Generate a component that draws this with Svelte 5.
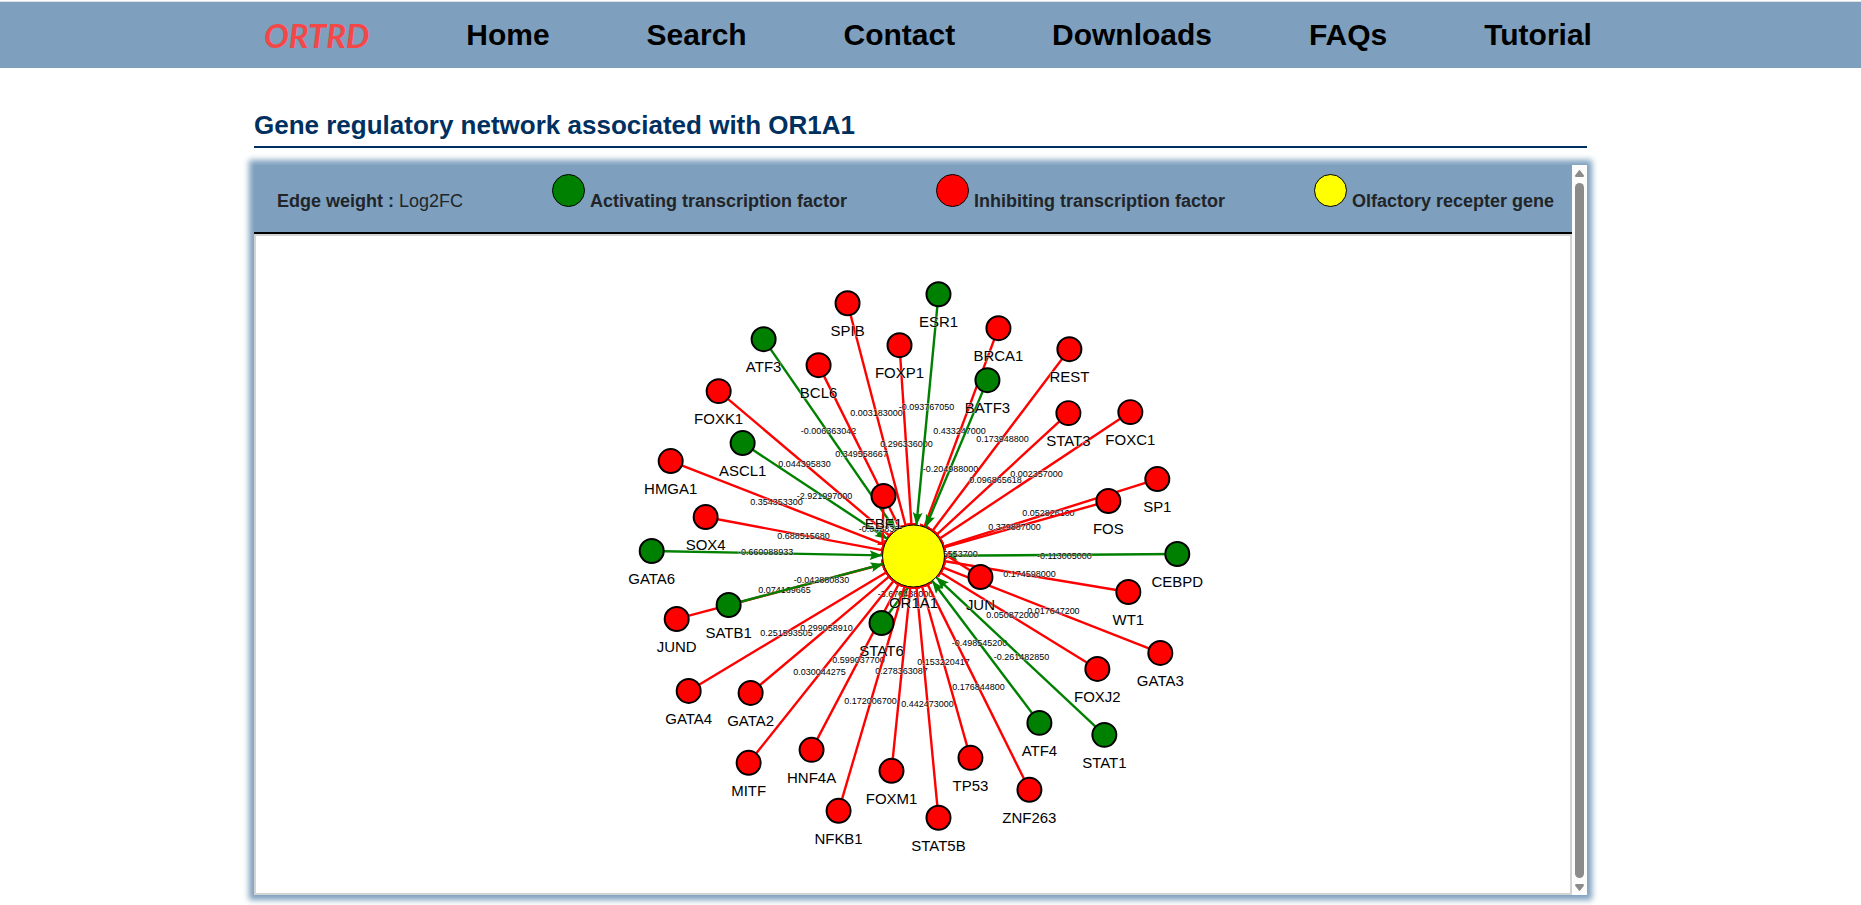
<script lang="ts">
  type Kind = "activating" | "inhibiting";

  interface Factor {
    name: string;
    kind: Kind;
    x: number;
    y: number;
    weight: string;
    labelX: number;
    labelY: number;
    endX?: number;
    endY?: number;
  }

  const navLinks = ["Home", "Search", "Contact", "Downloads", "FAQs", "Tutorial"];

  const legend = [
    { kind: "activating", label: "Activating transcription factor" },
    { kind: "inhibiting", label: "Inhibiting transcription factor" },
    { kind: "receptor", label: "Olfactory recepter gene" },
  ];

  const gene = "OR1A1";
  const geneRadius = 31;
  const factorRadius = 12;

  // node and label positions are relative to the gene in the centre
  const factors: Factor[] = [
    { name: "SPIB", kind: "inhibiting", x: -66, y: -253, weight: "0.003183000", labelX: -37, labelY: -143 },
    { name: "ATF3", kind: "activating", x: -150, y: -217, weight: "-0.006363042", labelX: -85, labelY: -125 },
    { name: "BCL6", kind: "inhibiting", x: -95, y: -191, weight: "0.349558667", labelX: -52, labelY: -102 },
    { name: "FOXP1", kind: "inhibiting", x: -14, y: -211, weight: "0.296336000", labelX: -7, labelY: -112 },
    { name: "FOXK1", kind: "inhibiting", x: -195, y: -165, weight: "0.044395830", labelX: -109, labelY: -92 },
    { name: "ASCL1", kind: "activating", x: -171, y: -113, weight: "-2.921997000", labelX: -89, labelY: -60 },
    { name: "ESR1", kind: "activating", x: 25, y: -262, weight: "-0.093767050", labelX: 13, labelY: -149 },
    { name: "BRCA1", kind: "inhibiting", x: 85, y: -228, weight: "0.433247000", labelX: 46, labelY: -125 },
    { name: "BATF3", kind: "activating", x: 74, y: -176, weight: "-0.204988000", labelX: 37, labelY: -87 },
    { name: "REST", kind: "inhibiting", x: 156, y: -207, weight: "0.173948800", labelX: 89, labelY: -117 },
    { name: "STAT3", kind: "inhibiting", x: 155, y: -143, weight: "0.096865618", labelX: 82, labelY: -76 },
    { name: "FOXC1", kind: "inhibiting", x: 217, y: -144, weight: "0.002357000", labelX: 123, labelY: -82 },
    { name: "HMGA1", kind: "inhibiting", x: -243, y: -95, weight: "0.354353300", labelX: -137, labelY: -54 },
    { name: "SOX4", kind: "inhibiting", x: -208, y: -39, weight: "0.688515680", labelX: -110, labelY: -20 },
    { name: "GATA6", kind: "activating", x: -262, y: -5, weight: "-0.660088933", labelX: -148, labelY: -4 },
    { name: "JUND", kind: "inhibiting", x: -237, y: 63, weight: "0.074169665", labelX: -129, labelY: 34 },
    { name: "SATB1", kind: "activating", x: -185, y: 49, weight: "-0.042880830", labelX: -92, labelY: 24 },
    { name: "EBF1", kind: "inhibiting", x: -30, y: -60, weight: "-0.043830000", labelX: -27, labelY: -27, endX: -31, endY: -13 },
    { name: "SP1", kind: "inhibiting", x: 244, y: -77, weight: "0.052826100", labelX: 135, labelY: -43 },
    { name: "FOS", kind: "inhibiting", x: 195, y: -55, weight: "0.379887000", labelX: 101, labelY: -29 },
    { name: "CEBPD", kind: "activating", x: 264, y: -2, weight: "-0.113005000", labelX: 151, labelY: 0 },
    { name: "WT1", kind: "inhibiting", x: 215, y: 36, weight: "0.174598000", labelX: 116, labelY: 18 },
    { name: "JUN", kind: "inhibiting", x: 67, y: 21, weight: "0.085553700", labelX: 38, labelY: -2, endX: 34, endY: 0 },
    { name: "GATA3", kind: "inhibiting", x: 247, y: 97, weight: "0.017647200", labelX: 140, labelY: 55 },
    { name: "FOXJ2", kind: "inhibiting", x: 184, y: 113, weight: "0.050872000", labelX: 99, labelY: 59 },
    { name: "STAT6", kind: "activating", x: -32, y: 67, weight: "-3.670438000", labelX: -8, labelY: 38, endX: -5, endY: 31 },
    { name: "GATA4", kind: "inhibiting", x: -225, y: 135, weight: "0.251593505", labelX: -127, labelY: 77 },
    { name: "GATA2", kind: "inhibiting", x: -163, y: 137, weight: "0.299058910", labelX: -87, labelY: 72 },
    { name: "MITF", kind: "inhibiting", x: -165, y: 207, weight: "0.030044275", labelX: -94, labelY: 116 },
    { name: "HNF4A", kind: "inhibiting", x: -102, y: 194, weight: "0.599037700", labelX: -55, labelY: 104 },
    { name: "NFKB1", kind: "inhibiting", x: -75, y: 255, weight: "0.172006700", labelX: -43, labelY: 145 },
    { name: "FOXM1", kind: "inhibiting", x: -22, y: 215, weight: "0.278363087", labelX: -12, labelY: 115 },
    { name: "STAT5B", kind: "inhibiting", x: 25, y: 262, weight: "0.442473000", labelX: 14, labelY: 148 },
    { name: "TP53", kind: "inhibiting", x: 57, y: 202, weight: "0.153220417", labelX: 30, labelY: 106 },
    { name: "ZNF263", kind: "inhibiting", x: 116, y: 234, weight: "0.176844800", labelX: 65, labelY: 131 },
    { name: "ATF4", kind: "activating", x: 126, y: 167, weight: "-0.498545200", labelX: 66, labelY: 87 },
    { name: "STAT1", kind: "activating", x: 191, y: 179, weight: "-0.261482850", labelX: 108, labelY: 101 },
  ];

  function edgeEnd(factor: Factor) {
    if (factor.endX !== undefined && factor.endY !== undefined) {
      return { x: factor.endX, y: factor.endY };
    }
    const gap = factor.kind === "activating" ? geneRadius : geneRadius + 1;
    const scale = gap / Math.hypot(factor.x, factor.y);
    return { x: factor.x * scale, y: factor.y * scale };
  }
</script>

<header class="site-header">
  <nav class="nav" aria-label="Main">
    <a class="brand" href="#home">ORTRD</a>
    {#each navLinks as link}
      <a class="nav-link" href={`#${link.toLowerCase()}`}>{link}</a>
    {/each}
  </nav>
</header>

<main class="page">
  <h1>Gene regulatory network associated with {gene}</h1>

  <section class="panel">
    <div class="content">
      <div class="legend">
        <span class="legend-item"><b>Edge weight :</b> Log2FC</span>
        {#each legend as item}
          <span class="legend-item"><i class={`dot dot--${item.kind}`}></i> <b>{item.label}</b></span>
        {/each}
      </div>

      <div class="canvas">
        <svg viewBox="-658 -320 1315 657" role="img" aria-label={`Regulatory network of ${gene}`}>
          <defs>
            <marker id="arrow" viewBox="0 0 13 10" refX="13" refY="5" markerWidth="13" markerHeight="10" markerUnits="userSpaceOnUse" orient="auto">
              <path d="M0 0 L13 5 L0 10 Q4 5 0 0 Z" fill="#008000" />
            </marker>
            <marker id="tee" viewBox="0 0 3 10" refX="1" refY="5" markerWidth="3" markerHeight="10" markerUnits="userSpaceOnUse" orient="auto">
              <path d="M0 0 H3 V10 H0 Z" fill="#ff0000" />
            </marker>
          </defs>

          {#each factors as factor}
            {@const end = edgeEnd(factor)}
            <line
              class={`edge edge--${factor.kind}`}
              x1={factor.x}
              y1={factor.y}
              x2={end.x}
              y2={end.y}
              marker-end={factor.kind === "activating" ? "url(#arrow)" : "url(#tee)"}
            />
            <text class="weight" x={factor.labelX} y={factor.labelY + 3}>{factor.weight}</text>
          {/each}

          <circle class="node node--receptor" r={geneRadius} />
          <text class="name" y="52">{gene}</text>

          {#each factors as factor}
            <circle class={`node node--${factor.kind}`} cx={factor.x} cy={factor.y} r={factorRadius} />
            <text class="name" x={factor.x} y={factor.y + 33}>{factor.name}</text>
          {/each}
        </svg>
      </div>
    </div>

    <div class="scrollbar" aria-hidden="true">
      <svg width="9" height="7" viewBox="0 0 9 7"><path d="M4.5 0 Q5 0 5.5 1 L9 5.5 Q9 7 8 7 H1 Q0 7 0 5.5 L3.5 1 Q4 0 4.5 0 Z" /></svg>
      <div class="thumb"></div>
      <svg width="9" height="7" viewBox="0 0 9 7"><path d="M4.5 7 Q5 7 5.5 6 L9 1.5 Q9 0 8 0 H1 Q0 0 0 1.5 L3.5 6 Q4 7 4.5 7 Z" /></svg>
    </div>
  </section>
</main>

<style>
  :global(body) {
    background: #fff;
    color: #212529;
    font-family: "Liberation Sans", Arial, sans-serif;
  }

  .site-header {
    margin-top: 1px;
    border-top: 1px solid #dee2e6;
    background: #7ea0be;
  }

  .nav {
    display: flex;
    align-items: center;
    justify-content: space-between;
    height: 66px;
    padding: 0 269px 0 264px;
  }

  .nav-link {
    color: #000;
    font-size: 30px;
    font-weight: 700;
    line-height: 34px;
    text-decoration: none;
  }

  .brand {
    color: #f44848;
    font-family: "Comic Sans MS", Lato, sans-serif;
    font-size: 33px;
    font-style: italic;
    font-weight: 700;
    line-height: 34px;
    text-decoration: none;
  }

  .page {
    padding: 41px 274px 10px 254px;
  }

  h1 {
    margin: 0 0 17px;
    padding-bottom: 5px;
    border-bottom: 2px solid #003060;
    color: #003060;
    font-size: 26px;
    font-weight: 700;
    line-height: 32px;
  }

  .panel {
    display: flex;
    background: #7ea0be;
    box-shadow: 0 0 6px 5px #7ea0be;
  }

  .content {
    flex: 1;
    min-width: 0;
  }

  .legend {
    display: flex;
    align-items: baseline;
    justify-content: space-between;
    box-sizing: border-box;
    height: 69px;
    padding: 9px 18px 0 23px;
    border-bottom: 2px solid #000;
    font-size: 18px;
    line-height: 26px;
  }

  .legend-item {
    white-space: nowrap;
  }

  .dot {
    display: inline-block;
    box-sizing: border-box;
    width: 33px;
    height: 33px;
    border: 1px solid #000;
    border-radius: 50%;
  }

  .dot--activating {
    background: #008000;
  }

  .dot--inhibiting {
    background: #ff0000;
  }

  .dot--receptor {
    background: #ffff00;
  }

  .canvas {
    border: 2px solid #d3d3d3;
    background: #fff;
  }

  .canvas svg {
    display: block;
    width: 100%;
    height: 657px;
  }

  .edge {
    stroke-width: 2.4;
  }

  .edge--activating {
    stroke: #008000;
  }

  .edge--inhibiting {
    stroke: #ff0000;
  }

  .node {
    stroke: #000;
    stroke-width: 2;
  }

  .node--activating {
    fill: #008000;
  }

  .node--inhibiting {
    fill: #ff0000;
  }

  .node--receptor {
    fill: #ffff00;
    stroke-width: 1;
  }

  .name,
  .weight {
    fill: #000;
    paint-order: stroke;
    stroke: rgba(255, 255, 255, 0.6);
    stroke-width: 1;
    text-anchor: middle;
  }

  .name {
    font-size: 15px;
  }

  .weight {
    font-size: 9px;
  }

  .scrollbar {
    display: flex;
    flex-direction: column;
    align-items: center;
    gap: 6px;
    box-sizing: border-box;
    width: 15px;
    padding: 5px 0 4px;
    background: #fcfcfc;
    fill: #8b8b8b;
  }

  .thumb {
    flex: 1;
    width: 9px;
    border-radius: 5px;
    background: #8b8b8b;
  }
</style>
